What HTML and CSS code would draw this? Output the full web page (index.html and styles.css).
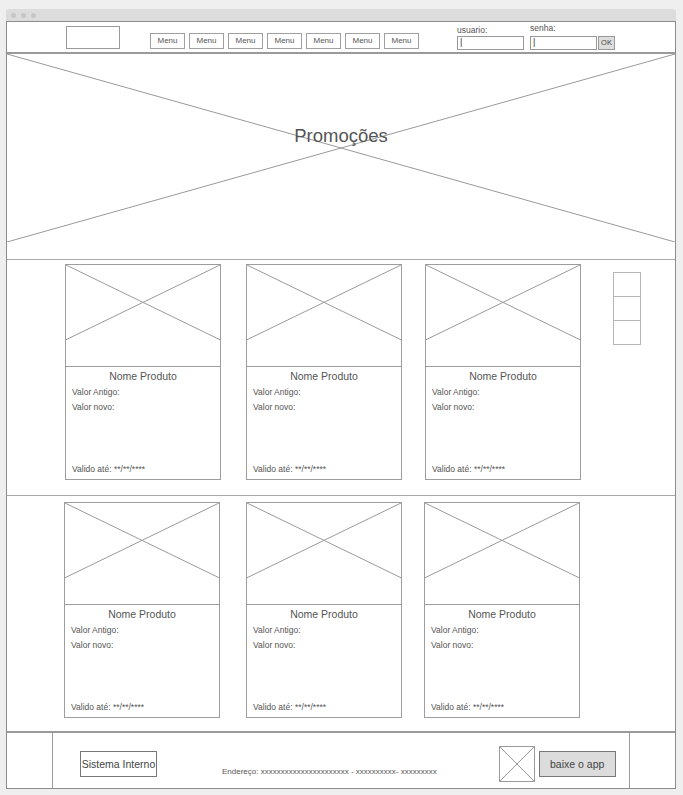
FILE: index.html
```html
<!DOCTYPE html>
<html>
	<head>
		<meta charset="UTF-8">
		<title>Promoções</title>
		<link rel="stylesheet" href="styles.css">
	</head>
	<body>
		<div class="window">
			<div class="titlebar">
				<span class="dot"></span>
				<span class="dot"></span>
				<span class="dot"></span>
			</div>
			<div class="frame">
				<!-- topo -->
				<div class="header">
					<div class="logo"></div>
					<ul class="menu">
						<li>Menu</li>
						<li>Menu</li>
						<li>Menu</li>
						<li>Menu</li>
						<li>Menu</li>
						<li>Menu</li>
						<li>Menu</li>
					</ul>
					<div class="login">
						<div class="field">
							<label>usuario:</label>
							<div class="input">|</div>
						</div>
						<div class="field senha">
							<label>senha:</label>
							<div class="input-row">
								<div class="input">|</div>
								<span class="ok">OK</span>
							</div>
						</div>
					</div>
				</div>

				<!-- banner -->
				<div class="hero">
					<svg class="cross" viewBox="0 0 100 100" preserveAspectRatio="none">
						<line x1="0" y1="0" x2="100" y2="100"/>
						<line x1="0" y1="100" x2="100" y2="0"/>
					</svg>
					<h1>Promoções</h1>
				</div>

				<!-- produtos -->
				<div class="row first">
					<div class="card">
						<div class="pic"><svg viewBox="0 0 100 100" preserveAspectRatio="none"><line x1="0" y1="0" x2="100" y2="74"/><line x1="0" y1="74" x2="100" y2="0"/></svg></div>
						<h2>Nome Produto</h2>
						<p>Valor Antigo:</p>
						<p>Valor novo:</p>
						<p class="valid">Valido até: **/**/****</p>
					</div>
					<div class="card">
						<div class="pic"><svg viewBox="0 0 100 100" preserveAspectRatio="none"><line x1="0" y1="0" x2="100" y2="74"/><line x1="0" y1="74" x2="100" y2="0"/></svg></div>
						<h2>Nome Produto</h2>
						<p>Valor Antigo:</p>
						<p>Valor novo:</p>
						<p class="valid">Valido até: **/**/****</p>
					</div>
					<div class="card">
						<div class="pic"><svg viewBox="0 0 100 100" preserveAspectRatio="none"><line x1="0" y1="0" x2="100" y2="74"/><line x1="0" y1="74" x2="100" y2="0"/></svg></div>
						<h2>Nome Produto</h2>
						<p>Valor Antigo:</p>
						<p>Valor novo:</p>
						<p class="valid">Valido até: **/**/****</p>
					</div>
					<div class="pager">
						<span></span>
						<span class="mid"></span>
						<span></span>
					</div>
				</div>

				<div class="row second">
					<div class="card">
						<div class="pic"><svg viewBox="0 0 100 100" preserveAspectRatio="none"><line x1="0" y1="0" x2="100" y2="74"/><line x1="0" y1="74" x2="100" y2="0"/></svg></div>
						<h2>Nome Produto</h2>
						<p>Valor Antigo:</p>
						<p>Valor novo:</p>
						<p class="valid">Valido até: **/**/****</p>
					</div>
					<div class="card">
						<div class="pic"><svg viewBox="0 0 100 100" preserveAspectRatio="none"><line x1="0" y1="0" x2="100" y2="74"/><line x1="0" y1="74" x2="100" y2="0"/></svg></div>
						<h2>Nome Produto</h2>
						<p>Valor Antigo:</p>
						<p>Valor novo:</p>
						<p class="valid">Valido até: **/**/****</p>
					</div>
					<div class="card">
						<div class="pic"><svg viewBox="0 0 100 100" preserveAspectRatio="none"><line x1="0" y1="0" x2="100" y2="74"/><line x1="0" y1="74" x2="100" y2="0"/></svg></div>
						<h2>Nome Produto</h2>
						<p>Valor Antigo:</p>
						<p>Valor novo:</p>
						<p class="valid">Valido até: **/**/****</p>
					</div>
				</div>

				<!-- rodape -->
				<div class="footer">
					<div class="footer-in">
						<span class="sistema">Sistema Interno</span>
						<span class="endereco">Endereço: xxxxxxxxxxxxxxxxxxxxxx - xxxxxxxxxx- xxxxxxxxx</span>
						<svg class="app-icon" viewBox="0 0 36 36">
							<rect x="0.5" y="0.5" width="35" height="35"/>
							<line x1="0" y1="0" x2="36" y2="36"/>
							<line x1="0" y1="36" x2="36" y2="0"/>
						</svg>
						<span class="app">baixe o app</span>
					</div>
				</div>
			</div>
		</div>
	</body>
</html>
```

FILE: styles.css
```css
*{
	padding: 0px;
	margin: 0px;
	box-sizing: border-box;
}
body {
	background: #efefef;
	font-family: "Liberation Sans", Arial, sans-serif;
	color: #555;
}
.window {
	width: 670px;
	margin: 9px 0 0 6px;
}
.titlebar {
	height: 12px;
	background: #dcdcdc;
	border-radius: 3px 3px 0 0;
	display: flex;
	align-items: center;
	gap: 5px;
	padding-left: 5px;
}
.dot {
	width: 5px;
	height: 5px;
	border-radius: 50%;
	background: #c6c6c6;
}
.frame {
	background: #fff;
	border: 1px solid #8c8c8c;
}

/* topo */
.header {
	height: 32px;
	border-bottom: 2px solid #9a9a9a;
	display: flex;
	align-items: flex-start;
}
.logo {
	width: 54px;
	height: 23px;
	border: 1px solid #999;
	margin: 4px 0 0 59px;
}
.menu {
	list-style: none;
	display: flex;
	gap: 4px;
	margin: 11px 0 0 30px;
}
.menu li {
	width: 35px;
	height: 16px;
	border: 1px solid #a0a0a0;
	font-size: 8px;
	line-height: 14px;
	text-align: center;
	color: #555;
}
.login {
	display: flex;
	gap: 6px;
	margin: 3px 0 0 38px;
}
.field label {
	display: block;
	font-size: 8.5px;
	line-height: 10px;
	height: 11px;
	color: #555;
}
.senha {
	margin-top: -2px;
}
.senha .input-row {
	margin-top: 2px;
}
.input {
	width: 67px;
	height: 14px;
	border: 1px solid #999;
	font-size: 9px;
	line-height: 11px;
	padding-left: 2px;
	color: #333;
}
.input-row {
	display: flex;
	gap: 1px;
}
.ok {
	width: 17px;
	height: 14px;
	border: 1px solid #999;
	background: #ddd;
	font-size: 7.5px;
	line-height: 12px;
	text-align: center;
	color: #444;
}

/* banner */
.hero {
	height: 188px;
	margin-bottom: 17px;
	position: relative;
	display: flex;
	align-items: center;
	justify-content: center;
}
.cross {
	position: absolute;
	left: 0;
	top: 0;
	width: 100%;
	height: 100%;
}
.cross line, .pic line {
	stroke: #9a9a9a;
	stroke-width: 1;
	vector-effect: non-scaling-stroke;
}
.hero h1 {
	position: relative;
	font-weight: normal;
	font-size: 18.5px;
	color: #555;
	margin-top: -24px;
}

/* produtos */
.row {
	display: flex;
	align-items: flex-start;
	border-top: 1px solid #a8a8a8;
}
.first {
	padding: 4px 0 15px 58px;
	gap: 25px;
}
.first .card:nth-child(3) {
	margin-left: -2px;
}
.second {
	padding: 6px 0 13px 57px;
	gap: 26px;
}
.second .card:nth-child(3) {
	margin-left: -4px;
}
.card {
	width: 156px;
	height: 216px;
	border: 1px solid #9d9d9d;
	display: flex;
	flex-direction: column;
}
.pic {
	height: 102px;
	border-bottom: 1px solid #9d9d9d;
}
.pic svg {
	display: block;
	width: 100%;
	height: 100%;
}
.card h2 {
	font-weight: normal;
	font-size: 10.5px;
	line-height: 14px;
	text-align: center;
	margin-top: 2px;
	color: #555;
}
.card p {
	font-size: 8.5px;
	line-height: 12px;
	padding-left: 6px;
	margin-top: 3px;
	color: #555;
}
.card p.valid {
	margin-top: auto;
	margin-bottom: 4px;
}
.pager {
	margin: 8px 0 0 7px;
	display: flex;
	flex-direction: column;
}
.pager span {
	width: 28px;
	height: 25px;
	border: 1px solid #b5b5b5;
}
.pager span + span {
	margin-top: -1px;
}
.pager .mid {
	border-bottom-color: #888;
}

/* rodape */
.footer {
	height: 57px;
	border-top: 2px solid #9a9a9a;
	padding: 0 45px;
}
.footer-in {
	height: 100%;
	border-left: 1px solid #9a9a9a;
	border-right: 1px solid #9a9a9a;
	display: flex;
	align-items: flex-start;
	padding-left: 27px;
}
.sistema {
	width: 77px;
	height: 26px;
	border: 1px solid #777;
	font-size: 10.5px;
	line-height: 24px;
	text-align: center;
	color: #444;
	margin-top: 18px;
}
.endereco {
	font-size: 8px;
	line-height: 10px;
	color: #555;
	margin: 34px 0 0 65px;
}
.app-icon {
	width: 36px;
	height: 36px;
	margin: 13px 0 0 62px;
}
.app-icon rect {
	fill: none;
	stroke: #9a9a9a;
}
.app-icon line {
	stroke: #9a9a9a;
}
.app {
	width: 77px;
	height: 26px;
	border: 1px solid #777;
	background: #dcdcdc;
	font-size: 10.5px;
	line-height: 24px;
	text-align: center;
	color: #444;
	margin: 18px 0 0 4px;
}
```
